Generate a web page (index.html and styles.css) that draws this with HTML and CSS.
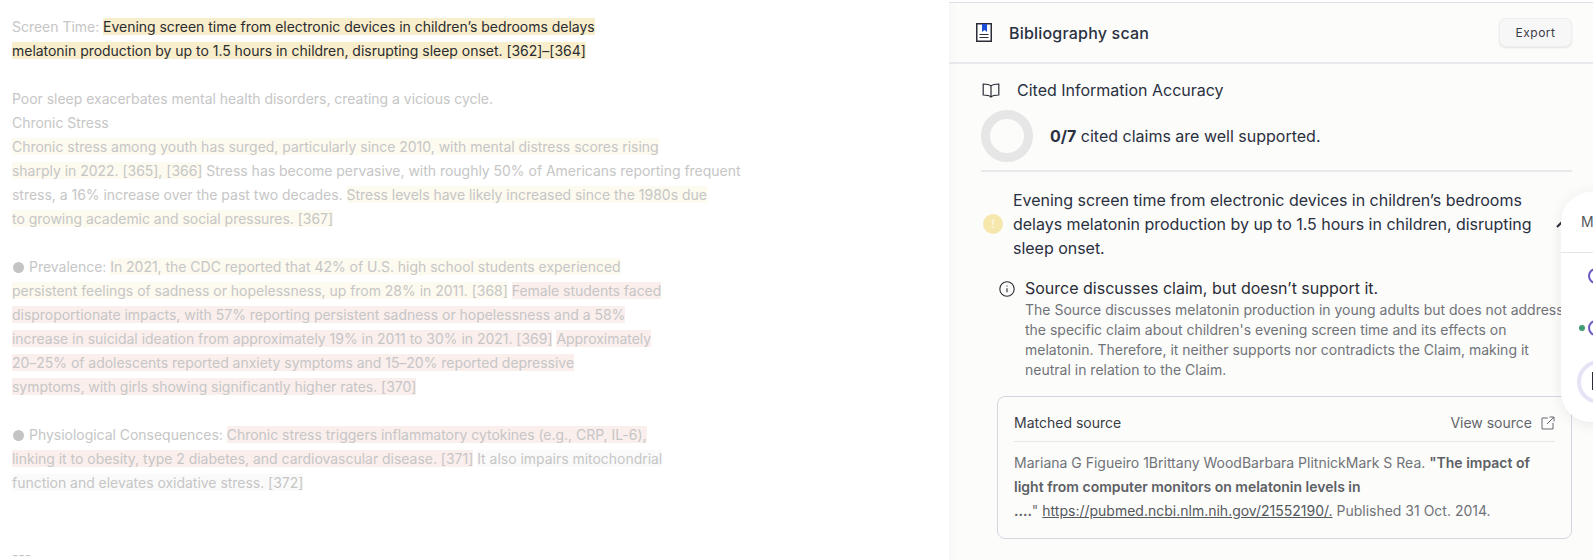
FILE: index.html
```html
<!DOCTYPE html>
<html lang="en">
<head>
<meta charset="utf-8">
<title>Bibliography scan</title>
<link rel="stylesheet" href="styles.css">
</head>
<body>
<div class="page">
  <main class="doc">
    <p class="line">Screen Time: <span class="hl-active">Evening screen time from electronic devices in children’s bedrooms delays</span></p>
    <p class="line"><span class="hl-active">melatonin production by up to 1.5 hours in children, disrupting sleep onset. [362]–[364]</span></p>
    <p class="line blank"></p>
    <p class="line">Poor sleep exacerbates mental health disorders, creating a vicious cycle.</p>
    <p class="line">Chronic Stress</p>
    <p class="line"><span class="hl-yellow">Chronic stress among youth has surged, particularly since 2010, with mental distress scores rising</span></p>
    <p class="line"><span class="hl-yellow">sharply in 2022. [365], [366]</span> Stress has become pervasive, with roughly 50% of Americans reporting frequent</p>
    <p class="line">stress, a 16% increase over the past two decades. <span class="hl-yellow">Stress levels have likely increased since the 1980s due</span></p>
    <p class="line"><span class="hl-yellow">to growing academic and social pressures. [367]</span></p>
    <p class="line blank"></p>
    <p class="line"><i class="bullet"></i>Prevalence: <span class="hl-yellow">In 2021, the CDC reported that 42% of U.S. high school students experienced</span></p>
    <p class="line"><span class="hl-yellow">persistent feelings of sadness or hopelessness, up from 28% in 2011. [368]</span> <span class="hl-pink">Female students faced</span></p>
    <p class="line"><span class="hl-pink">disproportionate impacts, with 57% reporting persistent sadness or hopelessness and a 58%</span></p>
    <p class="line"><span class="hl-pink">increase in suicidal ideation from approximately 19% in 2011 to 30% in 2021. [369]</span> <span class="hl-pink">Approximately</span></p>
    <p class="line"><span class="hl-pink">20–25% of adolescents reported anxiety symptoms and 15–20% reported depressive</span></p>
    <p class="line"><span class="hl-pink">symptoms, with girls showing significantly higher rates. [370]</span></p>
    <p class="line blank"></p>
    <p class="line"><i class="bullet"></i>Physiological Consequences: <span class="hl-pink">Chronic stress triggers inflammatory cytokines (e.g., CRP, IL-6),</span></p>
    <p class="line"><span class="hl-pink">linking it to obesity, type 2 diabetes, and cardiovascular disease. [371]</span> <span class="hl-gray">It also impairs mitochondrial</span></p>
    <p class="line"><span class="hl-gray">function and elevates oxidative stress. [372]</span></p>
    <p class="line blank"></p>
    <p class="line blank"></p>
    <p class="line">---</p>
  </main>

  <aside class="panel">
    <header class="panel-head">
      <div class="panel-title">
        <svg class="doc-icon" width="16" height="19" viewBox="0 0 16 19" aria-hidden="true">
          <rect x="0.75" y="0.75" width="14.5" height="17.5" fill="#fff" stroke="#2a2d36" stroke-width="1.5"/>
          <path d="M6 1h5v8l-2.500-2L6 9z" fill="#1d4ed8"/>
          <path d="M3.500 11.500h9M3.500 14.500h9" stroke="#2a2d36" stroke-width="1"/>
        </svg>
        <h1>Bibliography scan</h1>
      </div>
      <button class="export">Export</button>
    </header>

    <div class="panel-body">
      <div class="section-title">
        <svg width="18" height="15" viewBox="0 0 18 15" fill="none" stroke="#2a2d36" stroke-width="1.2" aria-hidden="true">
          <path d="M9 3C7.500 1.600 5 1 1.200 1v11c3.800 0 6.300.5 7.800 2 1.500-1.500 4-2 7.800-2V1C13 1 10.500 1.600 9 3zM9 3v11"/>
        </svg>
        <h2>Cited Information Accuracy</h2>
      </div>

      <div class="score">
        <div class="ring"></div>
        <p><strong>0/7</strong> cited claims are well supported.</p>
      </div>

      <div class="claim">
        <span class="warn">!</span>
        <p>Evening screen time from electronic devices in children’s bedrooms delays melatonin production by up to 1.5 hours in children, disrupting sleep onset.</p>
        <svg class="chevron" width="12" height="8" viewBox="0 0 12 8" fill="none" stroke="#2a2d36" stroke-width="2" aria-hidden="true"><path d="M1 7l5-5 5 5"/></svg>
      </div>

      <div class="verdict">
        <svg class="info" width="16" height="16" viewBox="0 0 16 16" fill="none" stroke="#2a2d36" stroke-width="1.1" aria-hidden="true">
          <circle cx="8" cy="8" r="7.200"/><path d="M8 7.300v4M8 4.400v1"/>
        </svg>
        <div>
          <h3>Source discusses claim, but doesn’t support it.</h3>
          <p>The Source discusses melatonin production in young adults but does not address the specific claim about children's evening screen time and its effects on melatonin. Therefore, it neither supports nor contradicts the Claim, making it neutral in relation to the Claim.</p>
        </div>
      </div>

      <section class="source">
        <div class="source-head">
          <span class="source-label">Matched source</span>
          <a class="view">View source
            <svg width="14" height="14" viewBox="0 0 14 14" fill="none" stroke="#666a70" stroke-width="1" aria-hidden="true">
              <path d="M7 2H1v11h11V7M6 8l7-7M8.500 1H13v4.500"/>
            </svg>
          </a>
        </div>
        <p class="citation">Mariana G Figueiro 1Brittany WoodBarbara PlitnickMark S Rea. <strong>"The impact of light from computer monitors on melatonin levels in<br>....</strong>" <a href="#">https://pubmed.ncbi.nlm.nih.gov/21552190/.</a> Published 31 Oct. 2014.</p>
      </section>
    </div>

    <div class="popover">
      <div class="pop-head">M</div>
      <div class="pop-row"><span class="pop-c"></span></div>
      <div class="pop-row"><i class="pop-dot"></i><span class="pop-c"></span></div>
      <div class="pop-big"><i></i></div>
    </div>
  </aside>
</div>
</body>
</html>
```
FILE: styles.css
```css
* { box-sizing: border-box; }
html, body { margin: 0; height: 560px; overflow: hidden; background: #fff; }
body { font-family: Inter, "Liberation Sans", sans-serif; color: #2a2d36; }
h1, h2, h3, p { margin: 0; font-weight: 400; }

.page { display: flex; height: 560px; }

.doc { width: 949px; flex: none; padding: 15px 0 0 12px; font-size: 14px; line-height: 24px; letter-spacing: -0.025px; color: #c6c6c6; white-space: nowrap; }
.line { height: 24px; }
.bullet { display: inline-block; width: 11px; height: 11px; border-radius: 50%; background: #c4c4c4; margin: 0 5px 0 1px; vertical-align: -1px; }
.hl-active { background: #f9eecb; color: #2b2c30; }
.hl-yellow { background: #fdfaef; }
.hl-pink { background: #fbefed; }
.hl-gray { background: #fafafa; }

.panel { position: relative; flex: 1; height: 558px; background: #fcfcfb; border-top: 1px solid #dfe0e3; margin-top: 2px; box-shadow: inset 10px 0 8px -6px rgba(0, 0, 0, 0.025); overflow: hidden; }
.panel-head { height: 61px; display: flex; align-items: center; justify-content: space-between; padding: 0 21px 0 27px; border-bottom: 2px solid #e8e9ec; }
.panel-title { display: flex; align-items: center; gap: 17px; }
.panel-title h1 { font-size: 16px; font-weight: 500; letter-spacing: 0.2px; color: #2a3040; }
.doc-icon { display: block; }
.export { width: 73px; height: 29px; padding: 0; font: 400 12px Inter, sans-serif; letter-spacing: 0.5px; color: #3a3d45; background: #f7f7f7; border: 1px solid #eeeeee; border-radius: 7px; box-shadow: 0 1px 2px rgba(0, 0, 0, 0.1); }

.panel-body { padding: 16px 21px 0 32px; }
.section-title { display: flex; align-items: center; gap: 17px; height: 20px; padding-left: 1px; }
.section-title h2 { font-size: 16px; color: #2a3040; }

.score { display: flex; align-items: center; gap: 17px; height: 52px; margin-top: 10px; font-size: 16px; color: #2a3040; }
.score strong { font-weight: 700; }
.ring { width: 52px; height: 52px; border: 9px solid #e6e6e6; border-radius: 50%; flex: none; }

.claim { position: relative; display: flex; align-items: center; gap: 10px; margin-top: 8px; padding: 16px 20px 0 2px; border-top: 2px solid #e8e9ec; font-size: 16px; line-height: 24px; letter-spacing: -0.02px; color: #2a3040; }
.warn { flex: none; width: 20px; height: 20px; border-radius: 50%; background: #f6e7ad; color: #fbf3d5; font-size: 12px; font-weight: 700; line-height: 20px; text-align: center; }
.chevron { position: absolute; right: 4px; top: 48px; }

.verdict { display: flex; gap: 10px; margin-top: 18px; padding-left: 18px; }
.info { flex: none; margin-top: 3px; }
.verdict h3 { font-size: 16px; line-height: 20px; color: #2a2d36; }
.verdict p { width: 545px; font-size: 14px; line-height: 20px; color: #707378; margin-top: 2px; }

.source { margin: 16px 0 0 16px; height: 143px; padding: 0 16px; border: 1px solid #d5d7de; border-radius: 8px; }
.source-head { display: flex; justify-content: space-between; align-items: flex-start; height: 45px; padding-top: 16px; border-bottom: 1px solid #e6e7ea; font-size: 14px; line-height: 20px; }
.source-label { color: #3a3d45; }
.view { display: flex; align-items: center; gap: 9px; color: #63666c; }
.citation { margin-top: 9px; font-size: 14px; line-height: 24px; color: #707378; }
.citation strong { font-weight: 600; color: #5d6065; }
.citation a { color: #55585d; text-decoration: underline; }

.popover { position: absolute; left: 612px; top: 189px; width: 60px; height: 230px; background: #fff; border-radius: 30px 0 0 30px; box-shadow: 0 2px 14px rgba(0, 0, 0, 0.08); }
.pop-head { height: 61px; padding: 21px 0 0 20px; font-size: 14px; line-height: 18px; color: #55585d; border-bottom: 1px solid #e4e5ea; }
.pop-row { position: absolute; left: 0; width: 100%; height: 16px; }
.pop-row:nth-child(2) { top: 76px; }
.pop-row:nth-child(3) { top: 128px; }
.pop-c { position: absolute; left: 27px; top: 0; width: 16px; height: 16px; border: 2px solid #6a5bc0; border-radius: 50%; }
.pop-dot { position: absolute; left: 18px; top: 5px; width: 6px; height: 6px; border-radius: 50%; background: #3f9d75; }
.pop-big { position: absolute; left: 16px; top: 168px; width: 44px; height: 44px; border: 4px solid #e5e3f5; border-radius: 50%; }
.pop-big i { position: absolute; left: 11px; top: 8px; width: 3px; height: 18px; background: #2a2d36; }
```
